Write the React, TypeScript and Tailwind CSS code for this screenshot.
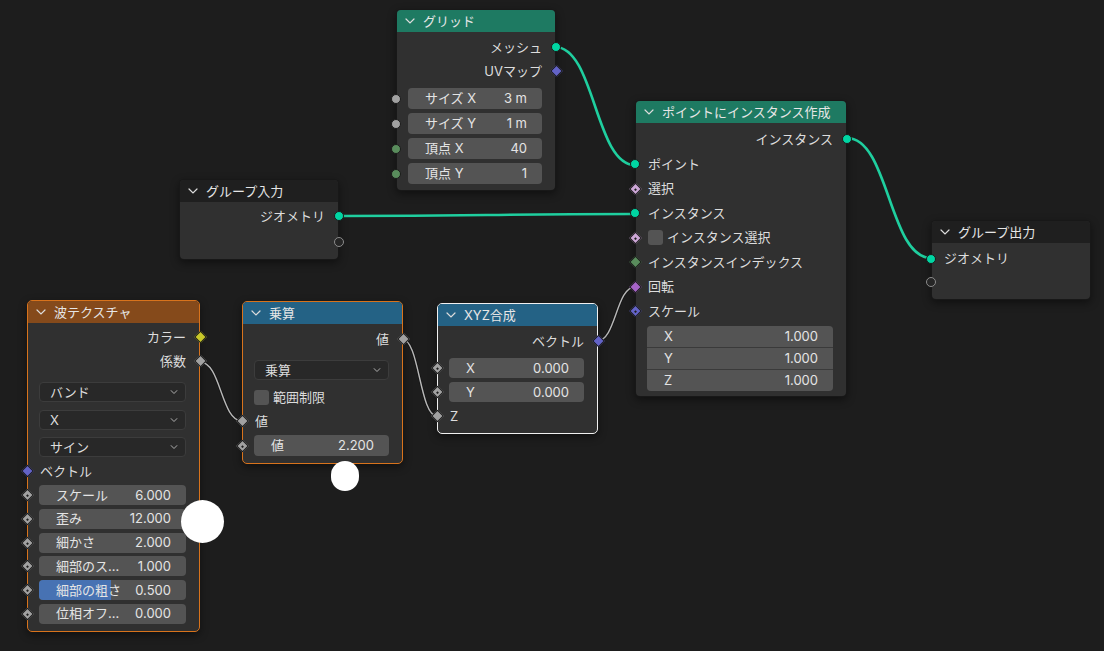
import React from 'react';

type Kind = 'geo' | 'float' | 'int' | 'vec' | 'col' | 'rot' | 'bool';
type Shape = 'circle' | 'diamond' | 'dot' | 'hollow';
type Side = 'left' | 'right';

const SOCK: Record<Kind, string> = {
  geo: 'bg-[#00d6a3]',
  float: 'bg-[#a1a1a1]',
  int: 'bg-[#598c5c]',
  vec: 'bg-[#6363c7]',
  col: 'bg-[#c7c729]',
  rot: 'bg-[#a663c7]',
  bool: 'bg-[#cca6d6]',
};

function Socket({ kind = 'float', shape = 'circle', side }: { kind?: Kind; shape?: Shape; side: Side }) {
  if (shape === 'hollow') {
    const pos = side === 'left' ? '-left-[6px]' : '-right-[6px]';
    return (
      <span
        className={`absolute top-1/2 -translate-y-1/2 ${pos} w-[10px] h-[10px] rounded-full border border-[#8c8c8c] bg-[#262626]`}
      />
    );
  }
  if (shape === 'circle') {
    const pos = side === 'left' ? '-left-[6px]' : '-right-[6px]';
    return (
      <span
        className={`absolute top-1/2 -translate-y-1/2 ${pos} w-[10px] h-[10px] rounded-full border border-[#1a1a1a] ${SOCK[kind]}`}
      />
    );
  }
  const pos = side === 'left' ? '-left-[5.5px]' : '-right-[5.5px]';
  return (
    <span
      className={`absolute top-1/2 -translate-y-1/2 ${pos} w-[9px] h-[9px] rotate-45 border border-[#1a1a1a] flex items-center justify-center ${SOCK[kind]}`}
    >
      {shape === 'dot' && <span className="w-[2px] h-[2px] bg-[#1e1e1e]" />}
    </span>
  );
}

function Chevron({ className = '' }: { className?: string }) {
  return (
    <svg width="10" height="6" viewBox="0 0 10 6" className={className}>
      <polyline points="1,1 5,5 9,1" fill="none" stroke="currentColor" strokeWidth="1.2" strokeLinecap="round" />
    </svg>
  );
}

function Node({
  pos,
  header,
  title,
  border = 'border-black/50',
  children,
}: {
  pos: string;
  header: string;
  title: string;
  border?: string;
  children: React.ReactNode;
}) {
  return (
    <div className={`absolute ${pos} rounded-[5px] border ${border} bg-[#303030] shadow-[0_3px_8px_rgba(0,0,0,0.45)]`}>
      <div className={`flex items-center gap-[8px] pl-[8px] h-[22px] rounded-t-[4px] text-[13px] text-[#e6e6e6] ${header}`}>
        <Chevron className="text-[#dcdcdc]" />
        <span>{title}</span>
      </div>
      {children}
    </div>
  );
}

function Out({ label, kind, shape = 'circle', h = 'h-6' }: { label: string; kind?: Kind; shape?: Shape; h?: string }) {
  return (
    <div className={`relative ${h} flex items-center justify-end pr-[13px]`}>
      {label}
      <Socket kind={kind} shape={shape} side="right" />
    </div>
  );
}

function In({
  label,
  kind,
  shape = 'circle',
  h = 'h-6',
  check = false,
}: {
  label: string;
  kind?: Kind;
  shape?: Shape;
  h?: string;
  check?: boolean;
}) {
  return (
    <div className={`relative ${h} flex items-center pl-[12px] gap-[4px]`}>
      <Socket kind={kind} shape={shape} side="left" />
      {check && <span className="w-[15px] h-[15px] rounded-[3px] bg-[#545454]" />}
      {label}
    </div>
  );
}

function Field({
  label,
  value,
  h = 'h-[21px]',
  kind,
  shape = 'dot',
  fill = false,
}: {
  label: string;
  value: string;
  h?: string;
  kind?: Kind;
  shape?: Shape;
  fill?: boolean;
}) {
  return (
    <div className={`relative ${h} flex`}>
      <Socket kind={kind} shape={shape} side="left" />
      <div className="relative ml-[11px] mr-[13px] flex-1 rounded-[4px] bg-[#545454] overflow-hidden flex items-center justify-between pl-[17px] pr-[15px] text-[#e4e4e4]">
        {fill && <div className="absolute inset-y-0 left-0 w-[49%] bg-[#4772b3]" />}
        <span className="relative whitespace-nowrap">{label}</span>
        <span className="relative">{value}</span>
      </div>
    </div>
  );
}

function Dropdown({ label, mt }: { label: string; mt: string }) {
  return (
    <div className={`${mt} ml-[11px] mr-[13px] h-[20px] rounded-[4px] bg-[#282828] border border-[#3c3c3c] flex items-center justify-between pl-[10px] pr-[6px]`}>
      <span>{label}</span>
      <Chevron className="text-[#bdbdbd] scale-75" />
    </div>
  );
}

function wire(x1: number, y1: number, x2: number, y2: number) {
  const d = Math.max(Math.abs(x2 - x1) * 0.5, 12);
  return `M${x1},${y1} C${x1 + d},${y1} ${x2 - d},${y2} ${x2},${y2}`;
}

export default function App() {
  const teal = [
    [555, 47, 635, 165],
    [339, 216, 635, 214],
    [847, 138, 931, 258],
  ];
  const gray = [
    [200, 362, 242, 421],
    [402, 339, 437, 416],
    [597, 341, 635, 287],
  ];

  return (
    <div
      className="relative w-[1104px] h-[651px] overflow-hidden bg-[#1d1d1d] text-[13px] text-[#dddddd] leading-none"
      style={{ fontFamily: 'Inter, "Noto Sans CJK JP", "DejaVu Sans", sans-serif' }}
    >
      {/* links */}
      <svg className="absolute inset-0 pointer-events-none" width="1104" height="651">
        {gray.map(([a, b, c, d], i) => (
          <g key={i}>
            <path d={wire(a, b, c, d)} fill="none" stroke="#151515" strokeWidth="3" />
            <path d={wire(a, b, c, d)} fill="none" stroke="#b8b8b8" strokeWidth="1.4" />
          </g>
        ))}
        {teal.map(([a, b, c, d], i) => (
          <path key={i} d={wire(a, b, c, d)} fill="none" stroke="#1fcf9f" strokeWidth="2.6" />
        ))}
      </svg>

      {/* グリッド */}
      <Node pos="left-[396px] top-[9px] w-[160px]" header="bg-[#1e7a62]" title="グリッド">
        <div className="pt-[3px] pb-[6px] flex flex-col">
          <Out label="メッシュ" kind="geo" />
          <Out label="UVマップ" kind="vec" shape="diamond" />
          <div className="mt-[5px] flex flex-col gap-[4px]">
            <Field label="サイズ X" value="3 m" kind="float" shape="circle" />
            <Field label="サイズ Y" value="1 m" kind="float" shape="circle" />
            <Field label="頂点 X" value="40" kind="int" shape="circle" />
            <Field label="頂点 Y" value="1" kind="int" shape="circle" />
          </div>
        </div>
      </Node>

      {/* グループ入力 */}
      <Node pos="left-[179px] top-[179px] w-[160px]" header="bg-[#1f1f1f]" title="グループ入力">
        <div className="pt-[1px] pb-[4px] flex flex-col">
          <Out label="ジオメトリ" kind="geo" h="h-[26px]" />
          <Out label="" shape="hollow" h="h-[26px]" />
        </div>
      </Node>

      {/* ポイントにインスタンス作成 */}
      <Node pos="left-[635px] top-[100px] w-[212px]" header="bg-[#1e7a62]" title="ポイントにインスタンス作成">
        <div className="pt-[3px] pb-[5px] flex flex-col">
          <Out label="インスタンス" kind="geo" h="h-[26px]" />
          <In label="ポイント" kind="geo" h="h-[24.5px]" />
          <In label="選択" kind="bool" shape="dot" h="h-[24.5px]" />
          <In label="インスタンス" kind="geo" h="h-[24.5px]" />
          <In label="インスタンス選択" kind="bool" shape="dot" h="h-[24.5px]" check />
          <In label="インスタンスインデックス" kind="int" shape="diamond" h="h-[24.5px]" />
          <In label="回転" kind="rot" shape="diamond" h="h-[24.5px]" />
          <In label="スケール" kind="vec" shape="dot" h="h-[24.5px]" />
          <div className="mt-[2px] ml-[11px] mr-[13px] rounded-[4px] overflow-hidden bg-[#3a3a3a] flex flex-col gap-px text-[#e4e4e4]">
            {[
              ['X', '1.000'],
              ['Y', '1.000'],
              ['Z', '1.000'],
            ].map(([l, v]) => (
              <div key={l} className="h-[21px] bg-[#545454] flex items-center justify-between pl-[17px] pr-[15px]">
                <span>{l}</span>
                <span>{v}</span>
              </div>
            ))}
          </div>
        </div>
      </Node>

      {/* グループ出力 */}
      <Node pos="left-[931px] top-[220px] w-[160px]" header="bg-[#1f1f1f]" title="グループ出力">
        <div className="pt-[4px] pb-[6px] flex flex-col">
          <In label="ジオメトリ" kind="geo" h="h-[23px]" />
          <In label="" shape="hollow" h="h-[23px]" />
        </div>
      </Node>

      {/* 波テクスチャ */}
      <Node
        pos="left-[27px] top-[300px] w-[173px]"
        header="bg-[#854a1b]"
        border="border-[#d8731c]"
        title="波テクスチャ"
      >
        <div className="pt-[2px] pb-[7px] flex flex-col">
          <Out label="カラー" kind="col" shape="diamond" />
          <Out label="係数" kind="float" shape="diamond" />
          <Dropdown label="バンド" mt="mt-[9px]" />
          <Dropdown label="X" mt="mt-[8px]" />
          <Dropdown label="サイン" mt="mt-[7px]" />
          <In label="ベクトル" kind="vec" shape="diamond" h="h-6 mt-[2px]" />
          <div className="mt-[2px] flex flex-col gap-[3.8px]">
            <Field label="スケール" value="6.000" h="h-[20px]" />
            <Field label="歪み" value="12.000" h="h-[20px]" />
            <Field label="細かさ" value="2.000" h="h-[20px]" />
            <Field label="細部のス..." value="1.000" h="h-[20px]" />
            <Field label="細部の粗さ" value="0.500" h="h-[20px]" fill />
            <Field label="位相オフ..." value="0.000" h="h-[20px]" />
          </div>
        </div>
      </Node>

      {/* 乗算 */}
      <Node
        pos="left-[242px] top-[301px] w-[161px]"
        header="bg-[#246285]"
        border="border-[#d8731c]"
        title="乗算"
      >
        <div className="pt-[3px] pb-[7px] flex flex-col">
          <Out label="値" kind="float" shape="diamond" />
          <Dropdown label="乗算" mt="mt-[9px]" />
          <div className="mt-[5px] h-6 flex items-center pl-[11px] gap-[4px]">
            <span className="w-[15px] h-[15px] rounded-[3px] bg-[#545454]" />
            範囲制限
          </div>
          <In label="値" kind="float" shape="diamond" />
          <div className="mt-[2px]">
            <Field label="値" value="2.200" />
          </div>
        </div>
      </Node>

      {/* XYZ合成 */}
      <Node
        pos="left-[437px] top-[303px] w-[161px]"
        header="bg-[#246285]"
        border="border-[#f0f0f0]"
        title="XYZ合成"
      >
        <div className="pt-[3px] pb-[5px] flex flex-col">
          <Out label="ベクトル" kind="vec" shape="diamond" />
          <div className="mt-[5px] flex flex-col gap-[4px]">
            <Field label="X" value="0.000" h="h-[20px]" />
            <Field label="Y" value="0.000" h="h-[20px]" />
          </div>
          <In label="Z" kind="float" shape="diamond" h="h-6 mt-[2px]" />
        </div>
      </Node>

      {/* cursor marks */}
      <div className="absolute left-[181px] top-[500px] w-[43px] h-[43px] rounded-full bg-white" />
      <div className="absolute left-[331px] top-[461px] w-[28px] h-[30px] rounded-full bg-white" />
    </div>
  );
}
